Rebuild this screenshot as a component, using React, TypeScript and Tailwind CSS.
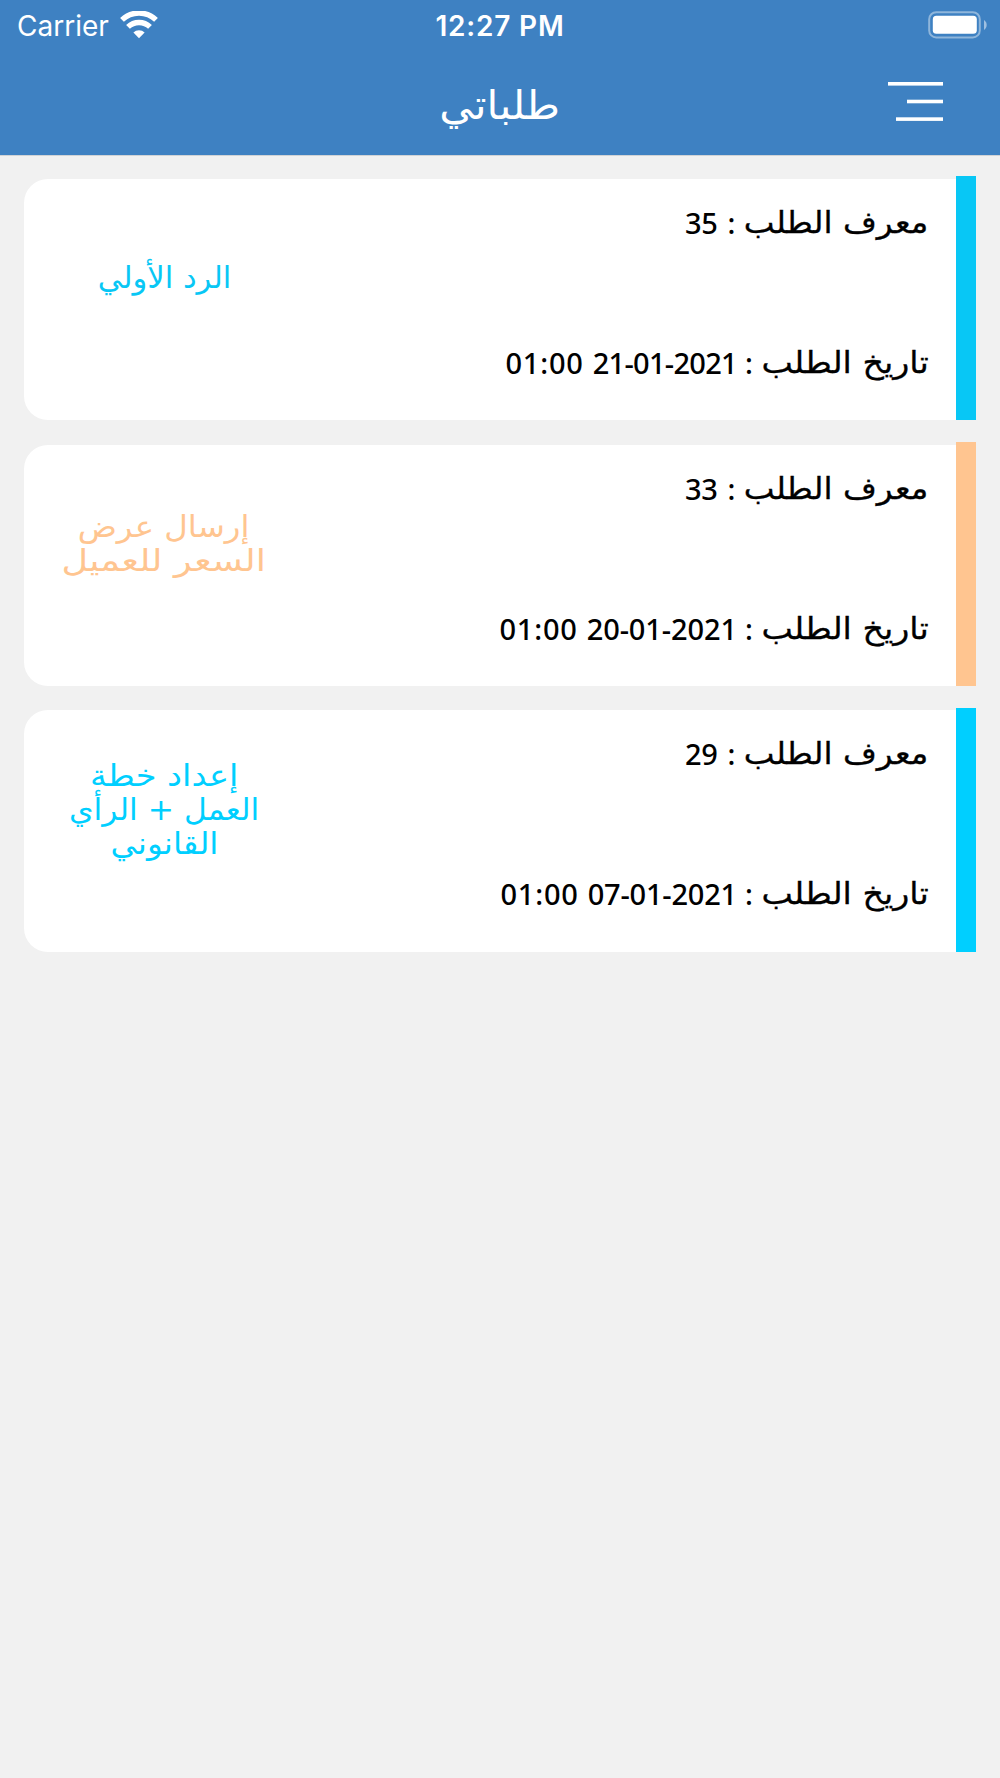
import clsx from 'clsx';

interface Line {
  text: string;
  stretch: string;
}

interface Order {
  id: number;
  date: string;
  time: string;
  status: Line[];
  bar: string;
  text: string;
  tracking: string;
}

const orders: Order[] = [
  {
    id: 35,
    date: '21-01-2021',
    time: '01:00',
    status: [{ text: 'الرد الأولي', stretch: 'scale-x-[1.02]' }],
    bar: 'bg-[#08c7f5]',
    text: 'text-[#08c7f5]',
    tracking: 'tracking-[-0.7px]',
  },
  {
    id: 33,
    date: '20-01-2021',
    time: '01:00',
    status: [
      { text: 'إرسال عرض', stretch: 'scale-x-[1.08]' },
      { text: 'السعر للعميل', stretch: 'scale-x-[1.22]' },
    ],
    bar: 'bg-[#ffc590]',
    text: 'text-[#ffc590]',
    tracking: 'tracking-[-0.1px]',
  },
  {
    id: 29,
    date: '07-01-2021',
    time: '01:00',
    status: [
      { text: 'إعداد خطة', stretch: 'scale-x-[1.12]' },
      { text: 'العمل + الرأي', stretch: 'scale-x-[1.045]' },
      { text: 'القانوني', stretch: 'scale-x-[1.09]' },
    ],
    bar: 'bg-[#00cfff]',
    text: 'text-[#00cfff]',
    tracking: 'tracking-[-0.2px]',
  },
];

function StatusBar() {
  return (
    <div dir="ltr" className="grid grid-cols-3 items-center h-[50px] pl-[17px] pr-[13px] font-['Inter'] text-white">
      <div className="flex items-center gap-[11px]">
        <span className="text-[28px] leading-[50px] pt-px">Carrier</span>
        <svg className="w-[38px] h-[28px] -mt-[2px]" viewBox="0 0 38 28" fill="none" stroke="currentColor">
          <path d="M2 8.9A24.5 24.5 0 0 1 36 8.9" strokeWidth="5.4" />
          <path d="M8 15.9A15.8 15.8 0 0 1 30 15.9" strokeWidth="5.4" />
          <path d="M13.4 21.6A7.8 7.8 0 0 1 24.6 21.6L19 27.2Z" fill="currentColor" stroke="none" />
        </svg>
      </div>
      <span className="text-center text-[28px] leading-[50px] font-semibold tracking-[0.8px] pt-px pr-[4px]">12:27 PM</span>
      <svg className="justify-self-end w-[60px] h-[28px] -mt-[2px]" viewBox="0 0 60 28">
        <rect x="2.2" y="1.2" width="50.6" height="25.2" rx="7" fill="none" stroke="#fff" strokeOpacity=".42" strokeWidth="2" />
        <rect x="5.8" y="4.8" width="44" height="18" rx="3.6" fill="#fff" />
        <path d="M57 9v10a6 6 0 0 0 0-10z" fill="#fff" fillOpacity=".5" />
      </svg>
    </div>
  );
}

function Header() {
  return (
    <header className="h-[156px] bg-[#3e81c2] border-b border-[#d0d3d6] text-white">
      <StatusBar />
      <div className="grid grid-cols-3 items-center h-[105px] px-[57px]">
        <button className="justify-self-start -mt-[3px]" aria-label="القائمة">
          <svg className="w-[55px] h-[39px]" viewBox="0 0 55 39" fill="currentColor">
            <rect x="0" y="0" width="55" height="3.6" />
            <rect x="19" y="17.7" width="36" height="3.6" />
            <rect x="8" y="35.3" width="47" height="3.6" />
          </svg>
        </button>
        <h1 className="text-center text-[40px] leading-[50px] scale-x-[1.06] pt-[4px]">طلباتي</h1>
      </div>
    </header>
  );
}

function OrderCard({ order }: { order: Order }) {
  return (
    <article className="flex h-[244px]">
      <div className={clsx('w-[20px]', order.bar)} />
      <div className="flex flex-1 mt-[2.5px] rounded-l-[24px] bg-white">
        <div className="flex flex-col flex-1 pr-[27.5px] pt-[19px] gap-[90px] text-[29px] leading-[50px] text-black whitespace-nowrap">
          <div className="flex">
            <span className="w-[193px] text-[30px] [-webkit-text-stroke:0.3px]">
              <span className="inline-block origin-right scale-x-[1.09]">معرف الطلب</span>
            </span>
            <span className="w-[18px] font-['Noto_Sans'] font-medium">:</span>
            <span className="font-['Noto_Sans'] font-medium tracking-[-0.3px]">{order.id}</span>
          </div>
          <div className="flex">
            <span className="w-[175.5px] text-[30px] [-webkit-text-stroke:0.3px]">
              <span className="inline-block origin-right scale-x-[1.11]">تاريخ الطلب</span>
            </span>
            <span className="w-[16px] font-['Noto_Sans'] font-medium">:</span>
            <span className={clsx("font-['Noto_Sans'] font-medium ml-[9px]", order.tracking)}>{order.date}</span>
            <span className="font-['Noto_Sans'] font-medium tracking-[0.8px]">{order.time}</span>
          </div>
        </div>
        <div className={clsx('flex flex-col justify-center items-center w-[280px] h-[199px] text-[30px] leading-[34px] whitespace-nowrap', order.text)}>
          {order.status.map((line) => (
            <span key={line.text} className={line.stretch}>{line.text}</span>
          ))}
        </div>
      </div>
    </article>
  );
}

export default function App() {
  return (
    <div dir="rtl" className="h-[1778px] bg-[#f1f1f1] font-['DejaVu_Sans',sans-serif]">
      <Header />
      <main className="flex flex-col gap-[21.8px] px-[24px] pt-[20.3px]">
        {orders.map((order) => (
          <OrderCard key={order.id} order={order} />
        ))}
      </main>
    </div>
  );
}
